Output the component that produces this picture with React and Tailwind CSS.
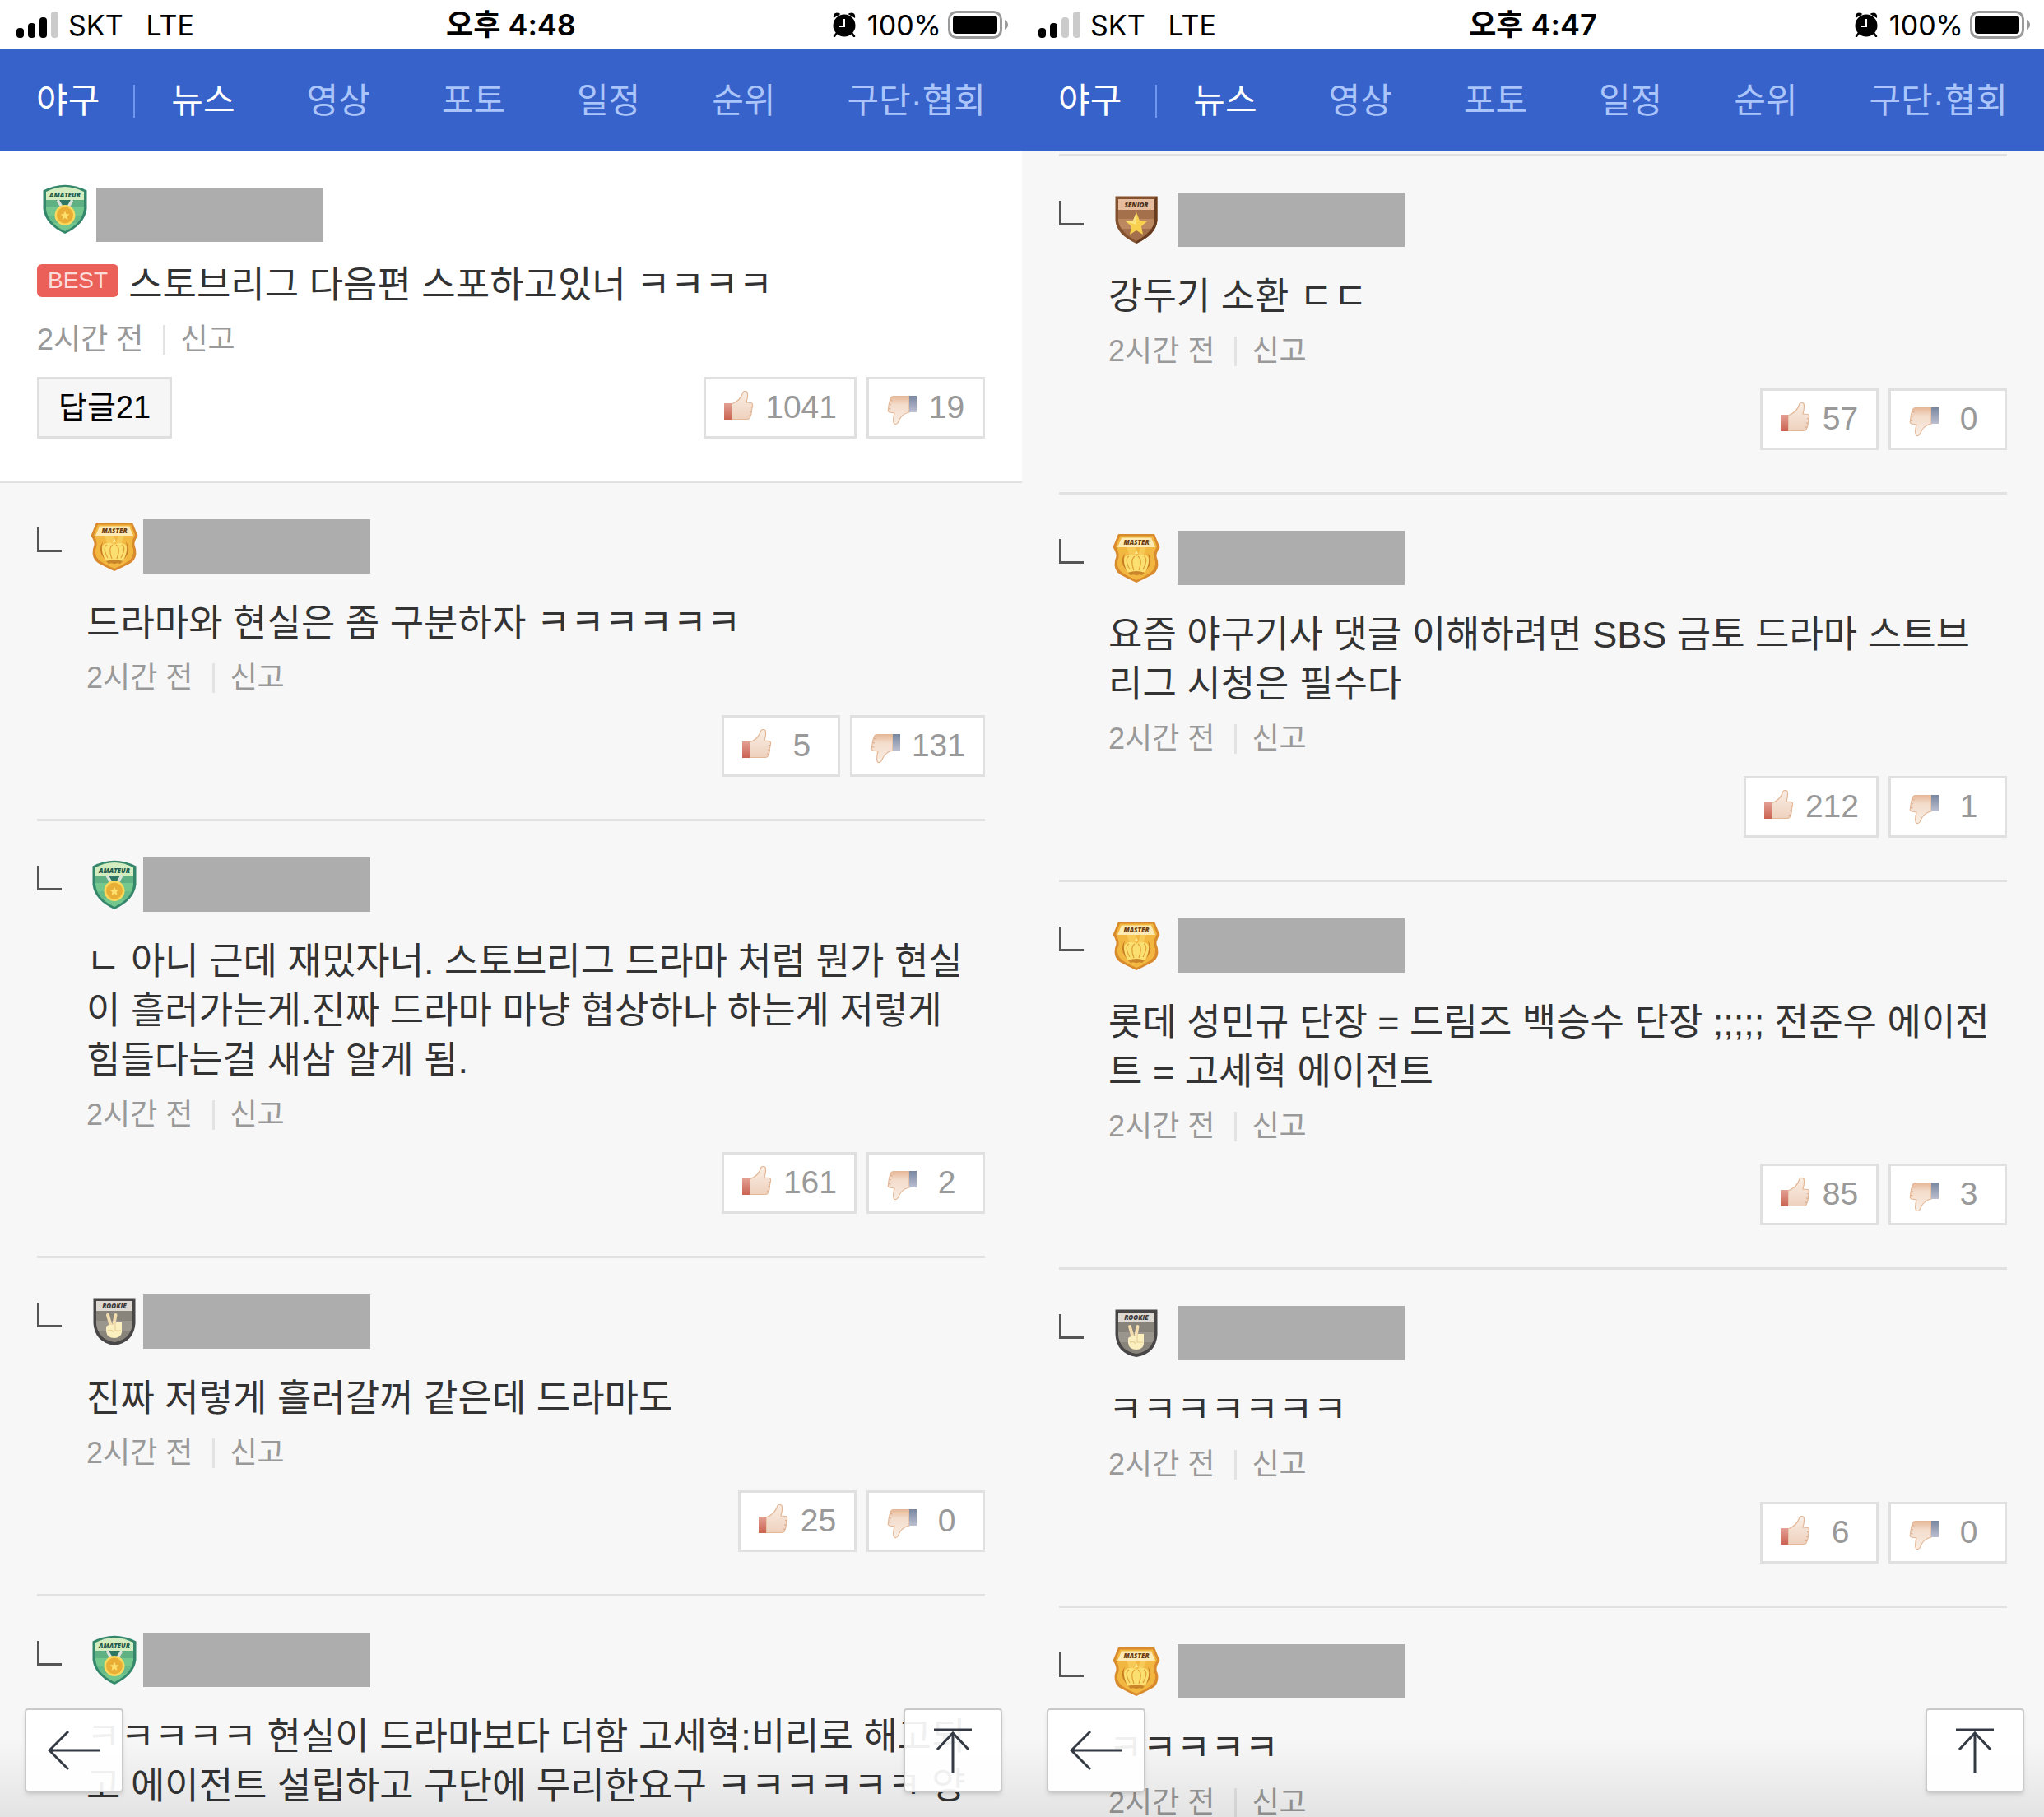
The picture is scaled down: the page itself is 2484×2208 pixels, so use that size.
import React from "react";

const HANGUL = "font-['Liberation_Sans','Noto_Sans_CJK_KR',sans-serif]";
const SYSTEM = "font-['Inter','Noto_Sans_CJK_KR',sans-serif]";

const LABEL = {
  fontFamily: '"Open Sans", sans-serif',
  fontWeight: 800,
  fontStyle: "italic",
  textAnchor: "middle",
};

function AmateurBadge() {
  return (
    <svg viewBox="0 0 60 60" className="size-[60px]" role="img" aria-label="Amateur">
      <defs>
        <clipPath id="am-clip">
          <path d="M7 9Q30-3 53 9V30Q51 47 30 57Q9 47 7 30Z" />
        </clipPath>
      </defs>
      <path d="M3.500 7.500Q30-6 56.500 7.500V30Q54 49 30 60Q6 49 3.500 30Z" fill="#35876c" />
      <g clipPath="url(#am-clip)">
        <rect x="0" y="0" width="60" height="20" fill="#d3ecc0" />
        <rect x="0" y="19" width="60" height="10" fill="#5fb184" />
        <rect x="0" y="28" width="60" height="32" fill="#74c78d" />
        <rect x="0" y="38" width="60" height="9" fill="#67bb88" />
      </g>
      <path d="M19 19H41L34 31H26Z" fill="#2f7765" />
      <path d="M21 19L28 31M39 19L32 31" stroke="#d9e3d8" strokeWidth="3.500" />
      <circle cx="30" cy="37.500" r="12.500" fill="#fbd95c" />
      <circle cx="30" cy="37.500" r="10" fill="#e9ae35" />
      <path d="M30 32.500L31.600 36.200L35.500 36.500L32.500 39L33.500 43L30 40.800L26.500 43L27.500 39L24.500 36.500L28.400 36.200Z" fill="#ffe170" />
      <text x="30" y="15.500" fontSize="8" fill="#1f5a49" {...LABEL}>AMATEUR</text>
    </svg>
  );
}

function MasterBadge() {
  return (
    <svg viewBox="0 0 60 60" className="size-[60px]" role="img" aria-label="Master">
      <path d="M8 1H52L58.500 17Q52 26 56 33Q58 45 50 50Q41 55 30 60Q19 55 10 50Q2 45 4 33Q8 26 1.500 17Z" fill="#d98a2c" />
      <path d="M10 3.500H50L55 16Q49 26 53 34Q54 43 47 48Q40 53 30 57Q20 53 13 48Q6 43 7 34Q11 26 5 16Z" fill="#f2b740" />
      <path d="M12 5.500H48L53 17H7Z" fill="#fdeab4" />
      <path d="M18 17L24 33H36L42 17H35L31 30L29 17Z" fill="#f8cd5c" opacity=".8" />
      <path d="M16 24Q9 34 17 44Q23 50 30 51Q37 50 43 44Q51 34 44 24Q48 36 40 43H20Q12 36 16 24Z" fill="#c87d25" />
      <path d="M30 20L32 25H28Z" fill="#ffe98c" />
      <path d="M19 47Q10 28 21 26Q26 25 30 28Q34 25 39 26Q50 28 41 47Q30 50 19 47Z" fill="#fbdf70" />
      <path d="M22 44Q15 31 21 28M27 45Q22 32 28 28M33 45Q38 32 32 28M38 44Q45 31 39 28" fill="none" stroke="#e0a136" strokeWidth="1.200" />
      <path d="M20 48Q30 44 40 48L37 51Q30 48 23 51Z" fill="#c98529" />
      <text x="30" y="14" fontSize="8" fill="#6b3d12" {...LABEL}>MASTER</text>
    </svg>
  );
}

function SeniorBadge() {
  return (
    <svg viewBox="0 0 60 60" className="size-[60px]" role="img" aria-label="Senior">
      <defs>
        <clipPath id="se-clip">
          <path d="M8 5H52V31Q50 45 30 56Q10 45 8 31Z" />
        </clipPath>
      </defs>
      <path d="M4.500 1.500H55.500V31Q54 48 30 59Q6 48 4.500 31Z" fill="#855230" />
      <path d="M55.500 1.500V31Q54 48 30 59L30 56Q50 45 52 31V5Z" fill="#693c1f" />
      <g clipPath="url(#se-clip)">
        <rect x="0" y="0" width="60" height="19" fill="#e7bd9f" />
        <rect x="0" y="18" width="60" height="42" fill="#a4704b" />
        <rect x="0" y="29" width="60" height="12" fill="#bb8860" />
      </g>
      <path d="M30 21L34 31L43 32L36 38L38 48L30 43L22 48L24 38L17 32L26 31Z" fill="#f8cf4f" />
      <path d="M30 21L26 31L17 32L30 36Z" fill="#fde483" />
      <text x="30" y="14.500" fontSize="8" fill="#4d2d18" {...LABEL}>SENIOR</text>
    </svg>
  );
}

function RookieBadge() {
  return (
    <svg viewBox="0 0 60 60" className="size-[60px]" role="img" aria-label="Rookie">
      <defs>
        <clipPath id="ro-clip">
          <path d="M8 5H52V32Q50 52 30 55Q10 52 8 32Z" />
        </clipPath>
      </defs>
      <path d="M4.500 1.500H55.500V32Q54 55 30 59Q6 55 4.500 32Z" fill="#484646" />
      <g clipPath="url(#ro-clip)">
        <rect x="0" y="0" width="60" height="18" fill="#dedad3" />
        <rect x="0" y="17" width="60" height="43" fill="#89847b" />
        <rect x="0" y="29" width="60" height="12" fill="#9a958d" />
      </g>
      <path d="M22 22L26 36M31.500 22L29 36" stroke="#f3dcae" strokeWidth="4" strokeLinecap="round" />
      <path d="M20 36Q23 33 31 34L32 31H39V43Q38 50 30 50Q21 50 20 42Z" fill="#fbeebf" />
      <path d="M31 34V41H38M22 41Q27 39 29 43" fill="none" stroke="#e6cf96" strokeWidth="1.200" />
      <text x="30" y="14" fontSize="8" fill="#3a3836" {...LABEL}>ROOKIE</text>
    </svg>
  );
}

const BADGES = {
  amateur: AmateurBadge,
  master: MasterBadge,
  senior: SeniorBadge,
  rookie: RookieBadge,
};

function ThumbGradients() {
  return (
    <svg className="absolute size-0" aria-hidden="true">
      <defs>
        <linearGradient id="cuff-red" x1="0" y1="0" x2="0" y2="1">
          <stop offset="0" stopColor="#e2a093" />
          <stop offset="1" stopColor="#cb6252" />
        </linearGradient>
        <linearGradient id="cuff-blue" x1="0" y1="0" x2="0" y2="1">
          <stop offset="0" stopColor="#77869f" />
          <stop offset="1" stopColor="#bcbfd0" />
        </linearGradient>
        <linearGradient id="skin" x1="0" y1="0" x2="0" y2="1">
          <stop offset="0" stopColor="#faeee4" />
          <stop offset="1" stopColor="#eed1be" />
        </linearGradient>
        <linearGradient id="skin-down" x1="0" y1="0" x2="0" y2="1">
          <stop offset="0" stopColor="#e6b797" />
          <stop offset=".3" stopColor="#f3dccb" />
          <stop offset="1" stopColor="#faeee4" />
        </linearGradient>
      </defs>
    </svg>
  );
}

function ThumbUp() {
  return (
    <svg viewBox="0 0 36 42" className="h-[42px] w-9" aria-hidden="true">
      <path d="M9 16Q20 12 23 1.500Q25-.5 28 1.500Q29.500 6 27 14L33 14.500Q35 15.500 34.500 18L33.500 23L33 28L31.500 32Q31 34.500 28 34.500H9Z" fill="url(#skin)" stroke="#e3b898" strokeWidth="1.200" />
      <path d="M32 19.500L34 20M31 25L33.500 25.500M30 30L32 30.500" stroke="#d9a98a" strokeWidth="1.200" />
      <rect x="0" y="15" width="9" height="20" fill="url(#cuff-red)" />
    </svg>
  );
}

function ThumbDown() {
  return (
    <svg viewBox="0 0 36 42" className="h-[42px] w-9" aria-hidden="true">
      <path d="M27 26Q17 28 13 39Q11 41.500 8.500 40Q6.500 36 9 27L3 26Q.5 25 1.500 22.500L2 18L3 13L4.500 9Q5 6.500 8 6.500H27Z" fill="url(#skin-down)" stroke="#e3b898" strokeWidth="1.200" />
      <path d="M2 21.500L4.500 22M2.800 16.500L5 17M4 11.500L6.500 12" stroke="#d9a98a" strokeWidth="1.200" />
      <rect x="27" y="6" width="9" height="20" fill="url(#cuff-blue)" />
    </svg>
  );
}

function VoteButton({ down, count }) {
  return (
    <button
      type="button"
      aria-label={down ? "비공감" : "공감"}
      className="flex h-[75px] items-center border-3 border-[#e0e0e0] bg-white pr-[21px] pl-[22px] text-[39px] text-[#999]"
    >
      {down ? <ThumbDown /> : <ThumbUp />}
      <span className="ml-3.5 min-w-[45px] text-center">{count}</span>
    </button>
  );
}

function Votes({ up, down }) {
  return (
    <div className="ml-auto flex gap-3">
      <VoteButton count={up} />
      <VoteButton down count={down} />
    </div>
  );
}

function Meta() {
  return (
    <div className="mt-2 flex h-14 items-center text-4xl text-[#999]">
      <span>2시간 전</span>
      <span className="mr-[18px] ml-6 h-9 w-[3px] bg-[#e3e3e3]" />
      <button type="button">신고</button>
    </div>
  );
}

function BestComment({ text, up, down, replies }) {
  return (
    <article className="border-b-3 border-[#e1e1e1] bg-white px-[45px] pt-[45px] pb-[51px]">
      <div className="flex h-[66px] items-start gap-2">
        <div className="-mt-1 ml-1">
          <AmateurBadge />
        </div>
        <div className="h-[66px] w-[276px] bg-[#adadad]" />
      </div>
      <p className="mt-[23px] flex items-start text-[45px] leading-[60px] text-[#333]">
        <span className="mt-1 mr-3 flex h-10 items-center rounded-md bg-[#eb6059] px-[13px] text-[28px] text-[#fbdcda]">BEST</span>
        {text}
      </p>
      <Meta />
      <div className="mt-[17px] flex">
        <button type="button" className="h-[75px] border-3 border-[#dfdfdf] bg-[#f6f6f6] px-[23px] text-[38px] text-black">
          답글{replies}
        </button>
        <Votes up={up} down={down} />
      </div>
    </article>
  );
}

function Reply({ rank, lines, up, down, wide }) {
  const Badge = BADGES[rank];
  return (
    <article className="mx-[45px] flex border-b-3 border-[#e1e1e1] pt-11 pb-[51px]">
      <div className="w-[60px] shrink-0 pt-2.5">
        <div className="h-[30px] w-[30px] border-b-3 border-l-3 border-[#555]" />
      </div>
      <div className="min-w-0 flex-1">
        <div className={wide ? "flex items-center gap-5 pl-1" : "flex items-center gap-[5px] pl-1"}>
          <Badge />
          <div className="h-[66px] w-[276px] bg-[#adadad]" />
        </div>
        <p className="mt-[31px] text-[45px] leading-[60px] whitespace-pre text-[#333]">{lines.join("\n")}</p>
        <Meta />
        <div className="mt-[17px] flex">
          <Votes up={up} down={down} />
        </div>
      </div>
    </article>
  );
}

function SignalBars({ level }) {
  const heights = ["h-3", "h-[18px]", "h-[25px]", "h-8"];
  return (
    <div className="flex items-end gap-[5px]">
      {heights.map((h, i) => (
        <span key={h} className={`${h} w-[9px] rounded-sm ${i < level ? "bg-black" : "bg-[#cbcbcb]"}`} />
      ))}
    </div>
  );
}

function StatusBar({ time, level }) {
  return (
    <header className={`grid h-[60px] shrink-0 grid-cols-3 items-center bg-white px-5 text-[34px] text-black ${SYSTEM}`}>
      <div className="flex items-center">
        <SignalBars level={level} />
        <span className="ml-3">SKT</span>
        <span className="ml-7">LTE</span>
      </div>
      <div className="text-center text-4xl font-semibold">오후 {time}</div>
      <div className="-mr-1 flex items-center justify-end">
        <svg viewBox="0 0 28 30" className="h-[30px] w-7" aria-label="알람" role="img">
          <circle cx="14" cy="16" r="13.500" fill="#000" />
          <path d="M1 7Q0 1 5 .5Q8 .5 9.500 2Z M27 7Q28 1 23 .5Q20 .5 18.500 2Z" fill="#000" />
          <path d="M5 25L2 29M23 25L26 29" stroke="#000" strokeWidth="2.500" strokeLinecap="round" />
          <path d="M14 8V17H7" fill="none" stroke="#fff" strokeWidth="2" />
        </svg>
        <span className="ml-3.5">100%</span>
        <svg viewBox="0 0 74 34" className="ml-2 h-[34px] w-[74px]" aria-label="배터리" role="img">
          <rect x="1.500" y="1.500" width="63" height="31" rx="9" fill="none" stroke="#9a9a9a" strokeWidth="3" />
          <rect x="6" y="6" width="54" height="22" rx="4" fill="#000" />
          <path d="M69 11Q73 13 73 17Q73 21 69 23Z" fill="#9a9a9a" />
        </svg>
      </div>
    </header>
  );
}

function NavBar() {
  const sections = ["영상", "포토", "일정", "순위", "구단·협회"];
  return (
    <nav className="flex h-[123px] shrink-0 items-center bg-[#3762ca] px-11 pt-0.5 text-[42px] text-[#abc5fb]">
      <a href="#baseball" className="text-white">야구</a>
      <span className="mr-11 ml-[41px] h-10 w-0.5 bg-[#6f97ee]" />
      <div className="flex flex-1 justify-between">
        <a href="#news" className="text-white">뉴스</a>
        {sections.map((name) => (
          <a key={name} href={`#${name}`}>{name}</a>
        ))}
      </div>
    </nav>
  );
}

function FloatingButtons() {
  const box =
    "flex h-[102px] w-[120px] items-center justify-center rounded-sm border-2 border-[#c9c9c9] bg-white/93 shadow-md";
  return (
    <div className="absolute inset-x-0 bottom-0 flex h-24 items-end justify-between bg-linear-to-b from-transparent to-black/8 pr-6 pb-[30px] pl-[30px]">
      <button type="button" aria-label="뒤로" className={box}>
        <svg viewBox="0 0 64 50" className="h-[50px] w-16" fill="none" stroke="#343a43" strokeWidth="3">
          <path d="M25 2L2 25L25 48M2 25H64" />
        </svg>
      </button>
      <button type="button" aria-label="맨 위로" className={box}>
        <svg viewBox="0 0 46 56" className="h-14 w-[46px]" fill="none" stroke="#343a43" strokeWidth="3">
          <path d="M0 3H46M4 27L23 7L42 27M23 7V56" />
        </svg>
      </button>
    </div>
  );
}

function Phone({ time, level, children }) {
  return (
    <section className="relative flex h-screen min-w-0 flex-col overflow-hidden bg-[#f7f7f7]">
      <StatusBar time={time} level={level} />
      <NavBar />
      <main className="min-h-0 flex-1 overflow-hidden">{children}</main>
      <FloatingButtons />
    </section>
  );
}

const LEFT = [
  { rank: "master", lines: ["드라마와 현실은 좀 구분하자 ㅋㅋㅋㅋㅋㅋ"], up: 5, down: 131 },
  {
    rank: "amateur",
    lines: [
      "ㄴ 아니 근데 재밌자너. 스토브리그 드라마 처럼 뭔가 현실",
      "이 흘러가는게.진짜 드라마 마냥 협상하나 하는게 저렇게",
      "힘들다는걸 새삼 알게 됨.",
    ],
    up: 161,
    down: 2,
  },
  { rank: "rookie", lines: ["진짜 저렇게 흘러갈꺼 같은데 드라마도"], up: 25, down: 0 },
  {
    rank: "amateur",
    lines: [
      "ㅋㅋㅋㅋㅋ 현실이 드라마보다 더함 고세혁:비리로 해고되",
      "고 에이전트 설립하고 구단에 무리한요구 ㅋㅋㅋㅋㅋㅋ 양",
    ],
    up: 0,
    down: 0,
  },
];

const RIGHT = [
  { rank: "senior", lines: ["강두기 소환 ㄷㄷ"], up: 57, down: 0 },
  {
    rank: "master",
    lines: ["요즘 야구기사 댓글 이해하려면 SBS 금토 드라마 스트브", "리그 시청은 필수다"],
    up: 212,
    down: 1,
  },
  {
    rank: "master",
    lines: ["롯데 성민규 단장 = 드림즈 백승수 단장 ;;;;; 전준우 에이전", "트 = 고세혁 에이전트"],
    up: 85,
    down: 3,
  },
  { rank: "rookie", lines: ["ㅋㅋㅋㅋㅋㅋㅋ"], up: 6, down: 0 },
  { rank: "master", lines: ["ㅋㅋㅋㅋㅋ"], up: 0, down: 0 },
];

export default function App() {
  return (
    <div className={`grid grid-cols-2 ${HANGUL}`}>
      <ThumbGradients />
      <Phone time="4:48" level={3}>
        <BestComment text="스토브리그 다음편 스포하고있너 ㅋㅋㅋㅋ" up={1041} down={19} replies={21} />
        {LEFT.map((c, i) => (
          <Reply key={i} {...c} />
        ))}
      </Phone>
      <Phone time="4:47" level={2}>
        <div className="mx-[45px] mt-1 h-[3px] bg-[#e1e1e1]" />
        {RIGHT.map((c, i) => (
          <Reply key={i} wide {...c} />
        ))}
      </Phone>
    </div>
  );
}
